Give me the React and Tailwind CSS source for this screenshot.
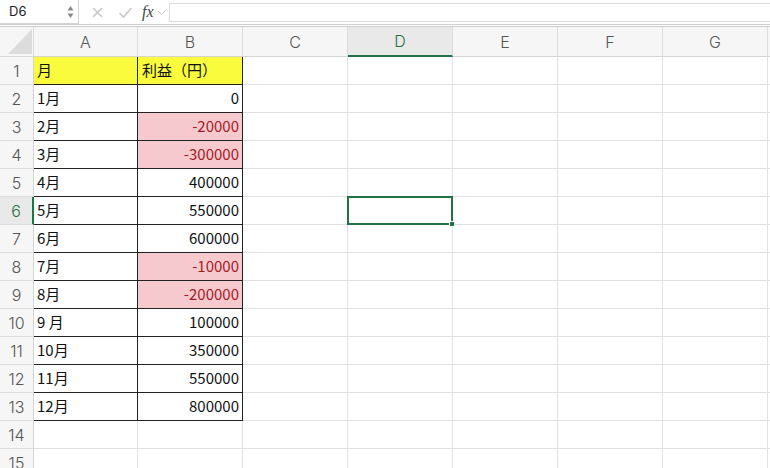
import React from "react";

const rows = [
  ["月", "利益（円）", "y"],
  ["1月", "0", ""],
  ["2月", "-20000", "p"],
  ["3月", "-300000", "p"],
  ["4月", "400000", ""],
  ["5月", "550000", ""],
  ["6月", "600000", ""],
  ["7月", "-10000", "p"],
  ["8月", "-200000", "p"],
  ["9 月", "100000", ""],
  ["10月", "350000", ""],
  ["11月", "550000", ""],
  ["12月", "800000", ""],
  ["", "", "e"],
  ["", "", "e"],
];

const cols = ["A", "B", "C", "D", "E", "F", "G"];
const widths = ["w-[104px]", "w-[105px]", "w-[105px]", "w-[105px]", "w-[105px]", "w-[105px]", "w-[105px]"];

const cellFont = { fontFamily: '"Noto Sans CJK JP", "Noto Sans", sans-serif' };
const hdrFont = { fontFamily: 'Inter, "Liberation Sans", sans-serif' };

export default function App() {
  return (
    <div className="w-[770px] h-[468px] overflow-hidden bg-white relative select-none">
      {/* formula bar */}
      <div className="h-[27px] flex items-start border-b-[3px] border-double border-[#cfcfcf] bg-white">
        <div className="w-[79px] h-[24px] border-r border-b border-[#d4d4d4] flex items-center justify-between pl-[9px] pr-[4px]">
          <span className="text-[13px] text-[#222]" style={hdrFont}>D6</span>
          <svg width="7" height="14" viewBox="0 0 7 14">
            <polygon points="3.5,1 6.5,5.5 0.5,5.5" fill="#888" />
            <polygon points="0.5,8.5 6.5,8.5 3.5,13" fill="#888" />
          </svg>
        </div>
        <div className="flex items-center h-[24px] pl-[12px] gap-[14px]">
          <svg width="13" height="13" viewBox="0 0 13 13">
            <path d="M2 2 L11 11 M11 2 L2 11" stroke="#c8c8c8" strokeWidth="1.6" />
          </svg>
          <svg width="15" height="13" viewBox="0 0 15 13">
            <path d="M1.5 7 L5.5 11 L13.5 2" stroke="#c8c8c8" strokeWidth="1.6" fill="none" />
          </svg>
        </div>
        <div className="flex items-center h-[24px] pl-[9px]">
          <span className="italic text-[16px] text-[#444]" style={{ fontFamily: '"Liberation Serif", serif' }}>fx</span>
          <svg width="9" height="6" viewBox="0 0 9 6" className="ml-[3px] mt-[2px]">
            <path d="M1 1 L4.5 4.5 L8 1" stroke="#c0c0c0" strokeWidth="1" fill="none" />
          </svg>
        </div>
        <div className="flex-1 h-[19px] mt-[3px] ml-[3px] border border-[#dcdcdc] border-r-0 bg-white"></div>
      </div>

      {/* column header */}
      <div className="flex h-[30px] bg-[#f6f6f6]">
        <div className="w-[34px] h-[30px] border-r border-b border-[#d9d9d9] relative overflow-hidden">
          <svg width="34" height="30" viewBox="0 0 34 30" className="absolute left-0 top-0">
            <polygon points="32,2 32,27 8,27" fill="#dcdcdc" />
          </svg>
        </div>
        {cols.map((c, i) => (
          <div
            key={c}
            className={`${widths[i]} h-[30px] border-r border-[#dcdcdc] flex items-center justify-center text-[16px] font-light ${
              c === "D" ? "bg-[#e9e9e9] text-[#217346] border-b-2 border-b-[#217346]" : "text-[#555] border-b border-b-[#d4d4d4]"
            }`}
            style={hdrFont}
          >
            {c}
          </div>
        ))}
        <div className="flex-1 border-b border-[#d4d4d4]"></div>
      </div>

      {/* rows */}
      {rows.map((r, ri) => {
        const n = ri + 1;
        const inTable = n <= 13;
        const sel = n === 6;
        return (
          <div key={n} className="flex h-[28px]">
            <div
              className={`w-[34px] h-[28px] border-b border-[#dcdcdc] flex items-center justify-center text-[16px] font-light ${
                sel ? "bg-[#e9e9e9] text-[#217346] border-r-2 border-r-[#217346]" : "bg-[#f6f6f6] text-[#555] border-r border-r-[#d4d4d4]"
              }`}
              style={hdrFont}
            >
              {n}
            </div>
            {/* A */}
            <div
              className={`w-[104px] h-[28px] border-r border-b flex items-center pl-[3px] text-[15px] text-[#111] ${
                inTable ? "border-[#222]" : "border-[#e1e1e1]"
              } ${r[2] === "y" ? "bg-[#fbfb3e]" : ""}`}
              style={cellFont}
            >
              {r[0]}
            </div>
            {/* B */}
            <div
              className={`w-[105px] h-[28px] border-r border-b flex items-center text-[15px] ${
                inTable ? "border-[#222]" : "border-[#e1e1e1]"
              } ${r[2] === "y" ? "bg-[#fbfb3e] justify-start pl-[4px] text-[#111]" : "justify-end pr-[3px]"} ${
                r[2] === "p" ? "bg-[#f6c9ce] text-[#a31b22]" : r[2] === "y" ? "" : "text-[#111]"
              }`}
              style={cellFont}
            >
              {r[1]}
            </div>
            {["C", "D", "E", "F", "G"].map((c) => (
              <div key={c} className="w-[105px] h-[28px] border-r border-b border-[#e1e1e1] relative">
                {sel && c === "D" && (
                  <div className="absolute left-[-1px] top-[-1px] right-[-1px] bottom-[-1px] border-2 border-[#217346] z-10">
                    <div className="absolute right-[-4px] bottom-[-4px] w-[6px] h-[6px] bg-[#217346] border border-white"></div>
                  </div>
                )}
              </div>
            ))}
            <div className="flex-1 border-b border-[#e1e1e1]"></div>
          </div>
        );
      })}
    </div>
  );
}
